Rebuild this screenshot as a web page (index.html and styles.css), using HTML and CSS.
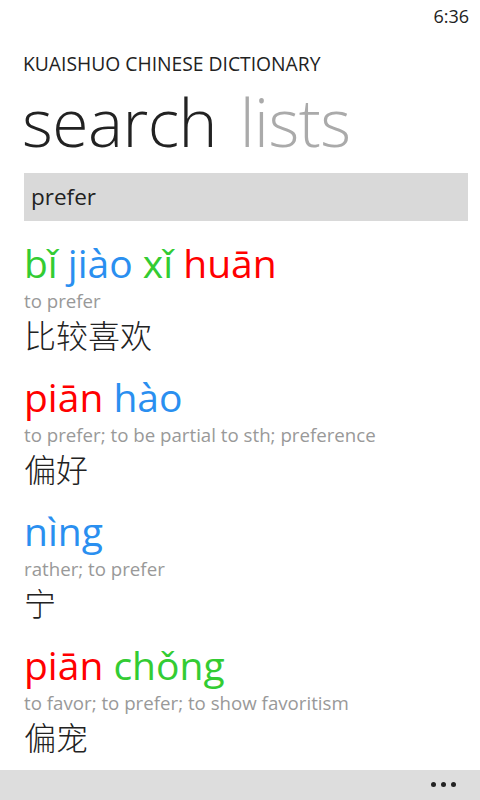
FILE: index.html
```html
<!DOCTYPE html>
<html>
<head>
<meta charset="utf-8">
<link rel="stylesheet" href="styles.css">
</head>
<body>
<div class="phone">
  <div class="status"><span class="clock">6:36</span></div>
  <div class="app-title">KUAISHUO CHINESE DICTIONARY</div>
  <div class="pivot">
    <span class="pivot-item active">search</span>
    <span class="pivot-item">lists</span>
  </div>
  <div class="searchbox">prefer</div>
  <div class="results">
    <div class="entry">
      <div class="pinyin"><span class="t3">bǐ</span> <span class="t4">jiào</span> <span class="t3">xǐ</span> <span class="t1">huān</span></div>
      <div class="def">to prefer</div>
      <div class="hanzi">比较喜欢</div>
    </div>
    <div class="entry">
      <div class="pinyin"><span class="t1">piān</span> <span class="t4">hào</span></div>
      <div class="def">to prefer; to be partial to sth; preference</div>
      <div class="hanzi">偏好</div>
    </div>
    <div class="entry">
      <div class="pinyin"><span class="t4">nìng</span></div>
      <div class="def">rather; to prefer</div>
      <div class="hanzi">宁</div>
    </div>
    <div class="entry">
      <div class="pinyin"><span class="t1">piān</span> <span class="t3">chǒng</span></div>
      <div class="def">to favor; to prefer; to show favoritism</div>
      <div class="hanzi">偏宠</div>
    </div>
  </div>
  <div class="appbar">
    <div class="dots"><i></i><i></i><i></i></div>
  </div>
</div>
</body>
</html>
```

FILE: styles.css
```css
* { box-sizing: border-box; }
html, body { margin: 0; padding: 0; background: #fff; }
body { font-family: "Open Sans", "Noto Sans", sans-serif; color: #222; }
.phone {
  width: 480px;
  height: 800px;
  overflow: hidden;
  display: flex;
  flex-direction: column;
  position: relative;
}
.status {
  height: 32px;
  display: flex;
  justify-content: flex-end;
  align-items: center;
  padding-right: 11px;
}
.clock { font-size: 18px; color: #222; line-height: 1; }
.app-title {
  margin-top: 20px;
  padding-left: 23px;
  font-size: 19.3px;
  line-height: 24px;
  color: #222;
  white-space: nowrap;
}
.pivot {
  margin-top: 3px;
  padding-left: 22px;
  height: 84px;
  font-size: 66px;
  line-height: 84px;
  font-weight: 300;
  letter-spacing: -0.5px;
  white-space: nowrap;
}
.pivot-item { color: #aaa; margin-right: 6px; }
.pivot-item.active { color: #222; }
.searchbox {
  margin: 10px 12px 0 24px;
  height: 48px;
  background: #d9d9d9;
  font-size: 22.5px;
  line-height: 48px;
  padding-left: 7px;
  color: #222;
}
.results {
  flex: 1;
  padding-left: 24px;
  padding-top: 17px;
}
.entry {
  height: 134px;
  display: flex;
  flex-direction: column;
}
.pinyin {
  font-size: 39px;
  line-height: 50px;
  white-space: nowrap;
}
.t1 { color: #ff0000; }
.t3 { color: #33cc33; }
.t4 { color: #2a8ff0; }
.def {
  font-size: 18.7px;
  line-height: 26px;
  color: #999;
  white-space: nowrap;
}
.hanzi {
  font-family: "Noto Sans CJK SC", sans-serif;
  font-size: 32px;
  line-height: 40px;
  color: #222;
  font-weight: 300;
}
.appbar {
  position: absolute;
  left: 0; right: 0; bottom: 0;
  height: 30px;
  background: #dddddd;
  display: flex;
  justify-content: flex-end;
  align-items: center;
  padding-right: 24px;
}
.dots { display: flex; gap: 5px; margin-top: -2px; }
.dots i {
  display: block;
  width: 5px;
  height: 5px;
  border-radius: 50%;
  background: #222;
}
```
